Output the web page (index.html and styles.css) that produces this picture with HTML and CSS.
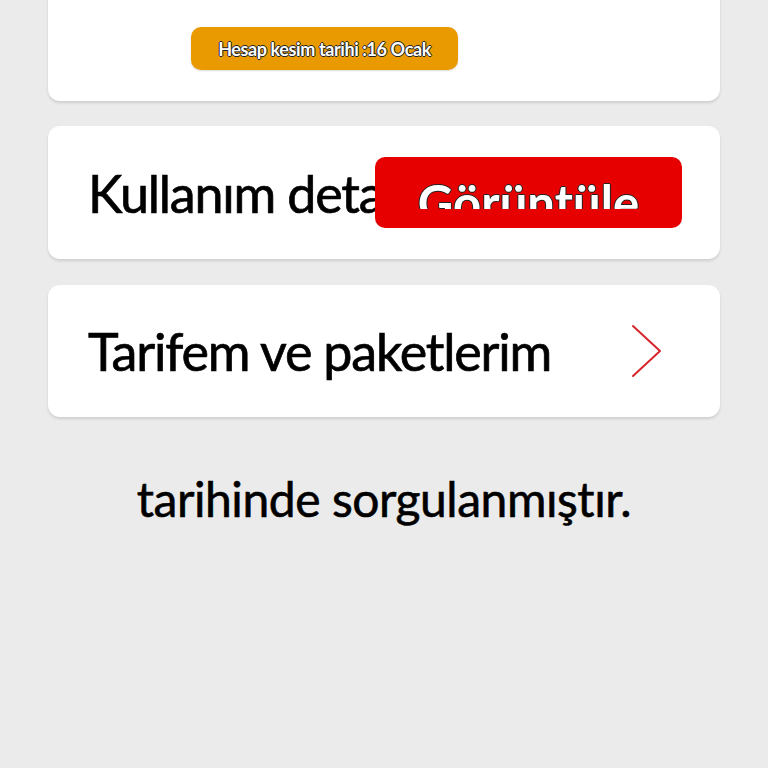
FILE: index.html
```html
<!DOCTYPE html>
<html lang="tr">
<head>
<meta charset="utf-8">
<title>Hesabım</title>
<link rel="stylesheet" href="styles.css">
</head>
<body>
<main class="page">
  <section class="card card-bill">
    <span class="badge">Hesap kesim tarihi :16 Ocak</span>
  </section>
  <section class="card card-row">
    <span class="row-title">Kullanım detayları</span>
    <button class="view-btn"><span class="view-label">Görüntüle</span></button>
  </section>
  <section class="card card-row card-last">
    <span class="row-title">Tarifem ve paketlerim</span>
    <svg class="chevron" width="32" height="56" viewBox="0 0 32 56" aria-hidden="true">
      <polyline points="3,3 30,28 3,53" fill="none" stroke="#d7262b" stroke-width="2" stroke-linecap="round" stroke-linejoin="round"/>
    </svg>
  </section>
  <p class="query-note">tarihinde sorgulanmıştır.</p>
</main>
</body>
</html>
```

FILE: styles.css
```css
html, body {
  margin: 0;
  padding: 0;
  background: #ebebeb;
}
body {
  font-family: Lato, "Open Sans", sans-serif;
  color: #000;
  height: 768px;
  overflow: hidden;
}
.page {
  padding: 0 48px;
  display: flex;
  flex-direction: column;
  gap: 25px;
}
.card {
  background: #fff;
  border-radius: 12px;
  box-shadow: 0 2px 3px rgba(0, 0, 0, 0.12);
}
.card-bill {
  margin-top: -20px;
  padding: 47px 0 31px 143px;
  display: flex;
}
.badge {
  display: flex;
  align-items: center;
  justify-content: center;
  width: 267px;
  height: 43px;
  box-sizing: border-box;
  background: #e99a00;
  border-radius: 10px;
  box-shadow: 0 1px 2px rgba(0, 0, 0, 0.15);
  color: #fff;
  font-size: 18px;
  font-weight: 700;
  letter-spacing: -0.4px;
  text-shadow: -1px 0 #222, 1px 0 #222, 0 -1px #222, 0 1px #222;
}
.card-row {
  position: relative;
  height: 133px;
  padding: 0 40px;
  display: flex;
  align-items: center;
  justify-content: space-between;
  overflow: hidden;
}
.card-last {
  height: 132px;
  margin-top: 1px;
}
.row-title {
  font-size: 52px;
  letter-spacing: -1.2px;
  -webkit-text-stroke: 0.7px #000;
  white-space: nowrap;
  line-height: 1;
}
.view-btn {
  position: absolute;
  left: 327px;
  top: 31px;
  width: 307px;
  height: 71px;
  border: 0;
  padding: 0;
  background: #e60000;
  border-radius: 10px;
  display: flex;
  justify-content: center;
  align-items: flex-start;
  font-family: inherit;
}
.view-label {
  display: block;
  height: 52px;
  overflow: hidden;
  color: #fff;
  font-size: 49px;
  font-weight: 700;
  line-height: 1;
  padding-top: 21px;
  box-sizing: border-box;
  letter-spacing: 0.1px;
  text-shadow: -1px 0 #222, 1px 0 #222, 0 -1px #222, 0 1px #222;
}
.chevron {
  margin-right: 18px;
  flex: none;
}
.query-note {
  margin: 33px 0 0;
  text-align: center;
  font-size: 48px;
  letter-spacing: -0.45px;
  -webkit-text-stroke: 0.6px #000;
  line-height: 1;
}
```
